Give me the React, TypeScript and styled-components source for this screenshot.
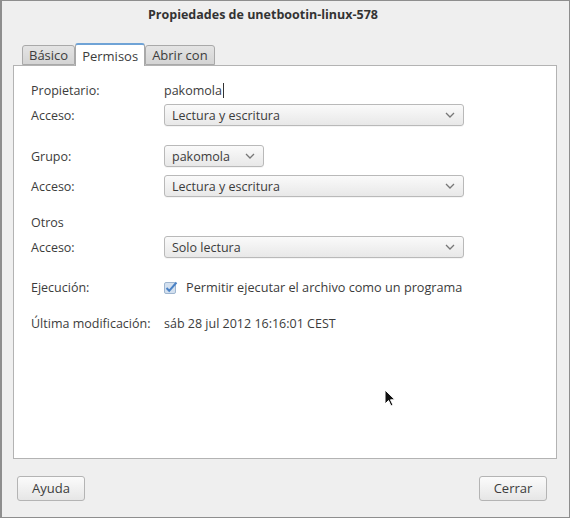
import React from 'react';
import styled, { createGlobalStyle } from 'styled-components';

const GlobalStyle = createGlobalStyle`
  html, body {
    margin: 0;
    padding: 0;
    background: #efefef;
  }
`;

const Window = styled.div`
  position: relative;
  box-sizing: border-box;
  width: 570px;
  height: 518px;
  display: flex;
  flex-direction: column;
  background: #efefef;
  border: 1px solid #8e8e8e;
  border-left-width: 2px;
  font-family: 'Open Sans', 'Noto Sans', sans-serif;
  font-size: 12.5px;
  color: #3c3c3c;
`;

const TitleBar = styled.div`
  height: 27px;
  display: flex;
  align-items: center;
  justify-content: center;
  padding-right: 45px;
  font-weight: bold;
  font-size: 12.5px;
  color: #333;
`;

const TabStrip = styled.div`
  display: flex;
  align-items: flex-end;
  height: 37px;
  padding-left: 20px;
  position: relative;
  z-index: 1;
`;

const Tab = styled.div<{ $active?: boolean }>`
  box-sizing: border-box;
  height: ${({ $active }) => ($active ? '23px' : '20px')};
  margin-bottom: ${({ $active }) => ($active ? '-1px' : '0')};
  padding: 0 6px;
  display: flex;
  align-items: center;
  border: 1px solid #a9a9a9;
  border-bottom: ${({ $active }) => ($active ? 'none' : '1px solid #a9a9a9')};
  border-top: ${({ $active }) => ($active ? '2px solid #6fa3d6' : '1px solid #a9a9a9')};
  border-radius: 3px 3px 0 0;
  background: ${({ $active }) =>
    $active ? '#ffffff' : 'linear-gradient(#e4e4e4, #d4d4d4)'};
  color: #3c3c3c;
  font-size: 13px;
  padding-top: ${({ $active }) => ($active ? '1px' : '0')};
`;

const Panel = styled.div`
  flex: 1;
  margin: 0 12px 0 11px;
  background: #ffffff;
  border: 1px solid #b3b3b3;
  padding: 13px 0 0 17px;
  display: flex;
  flex-direction: column;
`;

const Row = styled.div<{ $space?: number }>`
  display: grid;
  grid-template-columns: 133px 1fr;
  align-items: center;
  height: 22px;
  margin-top: ${({ $space }) => $space ?? 0}px;
`;

const Label = styled.span`
  white-space: nowrap;
`;

const Value = styled.span`
  display: flex;
  align-items: center;
  white-space: nowrap;
`;

const Caret = styled.span`
  display: inline-block;
  width: 1px;
  height: 15px;
  margin-left: 1px;
  background: #333;
`;

const Combo = styled.div<{ $width: number }>`
  box-sizing: border-box;
  width: ${({ $width }) => $width}px;
  height: 22px;
  display: flex;
  align-items: center;
  justify-content: space-between;
  padding: 0 8px 0 7px;
  border: 1px solid #b9b9b9;
  border-radius: 3px;
  background: linear-gradient(#fafafa, #e8e8e8);
  box-shadow: 0 1px 0 rgba(0, 0, 0, 0.04);
`;

const CheckLine = styled.label`
  display: flex;
  align-items: center;
  gap: 8px;
  white-space: nowrap;
  font-size: 12.7px;
`;

const Footer = styled.div`
  height: 58px;
  display: flex;
  align-items: center;
  justify-content: space-between;
  padding: 0 22px 0 15px;
`;

const Button = styled.button`
  box-sizing: border-box;
  width: 68px;
  height: 25px;
  border: 1px solid #b4b4b4;
  border-radius: 3px;
  background: linear-gradient(#fbfbfb, #e6e6e6);
  font-family: inherit;
  font-size: 13px;
  color: #3c3c3c;
  padding: 0;
`;

const Pointer = styled.svg`
  position: absolute;
  left: 382px;
  top: 388px;
`;

const Chevron = () => (
  <svg width="10" height="6" viewBox="0 0 10 6">
    <path d="M1 1 L5 5 L9 1" fill="none" stroke="#777" strokeWidth="1.3" />
  </svg>
);

const CheckBox = () => (
  <svg width="14" height="13" viewBox="0 0 14 13">
    <rect x="0.5" y="1.5" width="11" height="11" rx="1.5" fill="#d3e0ef" stroke="#9fb5cf" />
    <path d="M2.5 7 L5.2 9.8 L12.5 1.5" fill="none" stroke="#4a82c6" strokeWidth="2" />
  </svg>
);

type SelectProps = { value: string; width: number };

const Select = ({ value, width }: SelectProps) => (
  <Combo $width={width}>
    <span>{value}</span>
    <Chevron />
  </Combo>
);

export default function App() {
  return (
    <>
      <GlobalStyle />
      <Window>
        <TitleBar>Propiedades de unetbootin-linux-578</TitleBar>
        <TabStrip>
          <Tab>Básico</Tab>
          <Tab $active>Permisos</Tab>
          <Tab>Abrir con</Tab>
        </TabStrip>
        <Panel>
          <Row>
            <Label>Propietario:</Label>
            <Value>
              pakomola
              <Caret />
            </Value>
          </Row>
          <Row $space={3}>
            <Label>Acceso:</Label>
            <Select value="Lectura y escritura" width={300} />
          </Row>
          <Row $space={19}>
            <Label>Grupo:</Label>
            <Select value="pakomola" width={100} />
          </Row>
          <Row $space={8}>
            <Label>Acceso:</Label>
            <Select value="Lectura y escritura" width={300} />
          </Row>
          <Row $space={14}>
            <Label>Otros</Label>
          </Row>
          <Row $space={3}>
            <Label>Acceso:</Label>
            <Select value="Solo lectura" width={300} />
          </Row>
          <Row $space={18}>
            <Label>Ejecución:</Label>
            <CheckLine>
              <CheckBox />
              Permitir ejecutar el archivo como un programa
            </CheckLine>
          </Row>
          <Row $space={14}>
            <Label>Última modificación:</Label>
            <Value>sáb 28 jul 2012 16:16:01 CEST</Value>
          </Row>
        </Panel>
        <Footer>
          <Button>Ayuda</Button>
          <Button>Cerrar</Button>
        </Footer>
        <Pointer width="12" height="19" viewBox="0 0 12 19">
          <path
            d="M1 1 L1 15 L4.5 11.5 L7 17 L9 16 L6.5 10.8 L11 10.8 Z"
            fill="#111"
            stroke="#fff"
            strokeWidth="1"
            strokeLinejoin="round"
          />
        </Pointer>
      </Window>
    </>
  );
}
